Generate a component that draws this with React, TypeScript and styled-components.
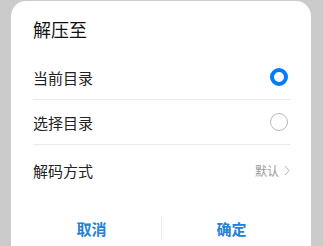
import React, { useState } from "react";
import styled, { createGlobalStyle } from "styled-components";

const GlobalStyle = createGlobalStyle`
  html, body {
    margin: 0;
    padding: 0;
    background: #cbcbcb;
    font-family: "Noto Sans CJK SC", "Noto Sans", sans-serif;
    overflow: hidden;
  }
`;

const Screen = styled.div`
  width: 323px;
  height: 246px;
  padding: 1px 12px 0 11px;
  box-sizing: border-box;
  overflow: hidden;
`;

const Dialog = styled.div`
  background: #fff;
  border-radius: 15px 15px 0 0;
  height: 245px;
  padding: 0 21px 0 22px;
  display: flex;
  flex-direction: column;
`;

const Title = styled.h2`
  margin: 0;
  height: 54px;
  display: flex;
  align-items: center;
  font-size: 18px;
  font-weight: 400;
  color: #111;
  padding-top: 2px;
  box-sizing: border-box;
`;

const Row = styled.div<{ divider?: boolean; tall?: boolean }>`
  height: ${p => (p.tall ? "50px" : "44px")};
  display: flex;
  align-items: center;
  justify-content: space-between;
  border-bottom: ${p => (p.divider ? "1px solid #e9e9e9" : "none")};
  cursor: pointer;
`;

const Label = styled.span`
  font-size: 15px;
  color: #222;
`;

const Radio = styled.span<{ checked: boolean }>`
  width: 18px;
  height: 18px;
  margin-right: 2px;
  border-radius: 50%;
  box-sizing: border-box;
  border: ${p => (p.checked ? "4.5px solid #007dff" : "1px solid #b9b9b9")};
`;

const Value = styled.span`
  display: flex;
  align-items: center;
  gap: 5px;
  font-size: 12px;
  color: #9a9a9a;
`;

const Footer = styled.div`
  margin: 20px -11px 0;
  display: flex;
  align-items: center;
  height: 26px;
`;

const Button = styled.button`
  flex: 1;
  background: none;
  border: none;
  padding: 0;
  font-family: inherit;
  font-size: 15px;
  font-weight: 700;
  color: #2680d4;
  cursor: pointer;
`;

const Separator = styled.div`
  width: 1px;
  height: 24px;
  background: #ececec;
`;

const Chevron = () => (
  <svg width="6" height="11" viewBox="0 0 6 11" fill="none">
    <path d="M1 1l4 4.5L1 10" stroke="#b0b0b0" strokeWidth="1" />
  </svg>
);

export default function App() {
  const [target, setTarget] = useState<"current" | "choose">("current");

  return (
    <>
      <GlobalStyle />
      <Screen>
        <Dialog>
          <Title>解压至</Title>
          <Row divider onClick={() => setTarget("current")}>
            <Label>当前目录</Label>
            <Radio checked={target === "current"} />
          </Row>
          <Row divider onClick={() => setTarget("choose")}>
            <Label>选择目录</Label>
            <Radio checked={target === "choose"} />
          </Row>
          <Row tall>
            <Label>解码方式</Label>
            <Value>
              默认
              <Chevron />
            </Value>
          </Row>
          <Footer>
            <Button>取消</Button>
            <Separator />
            <Button>确定</Button>
          </Footer>
        </Dialog>
      </Screen>
    </>
  );
}
